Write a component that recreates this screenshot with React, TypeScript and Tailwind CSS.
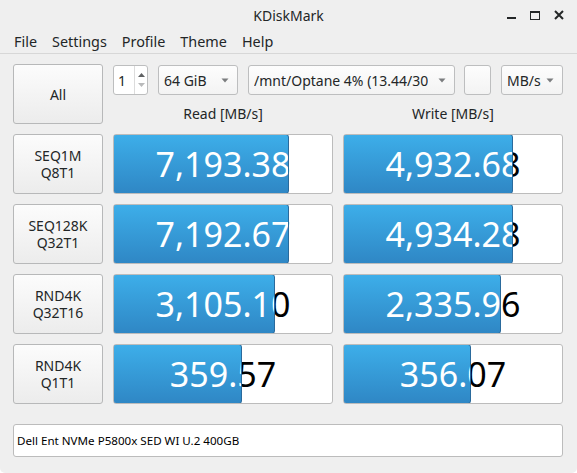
import React from "react";

const rows = [
  { l1: "SEQ1M", l2: "Q8T1", read: "7,193.38", rw: 176, write: "4,932.68", ww: 170 },
  { l1: "SEQ128K", l2: "Q32T1", read: "7,192.67", rw: 176, write: "4,934.28", ww: 170 },
  { l1: "RND4K", l2: "Q32T16", read: "3,105.10", rw: 162, write: "2,335.96", ww: 158 },
  { l1: "RND4K", l2: "Q1T1", read: "359.57", rw: 129, write: "356.07", ww: 128 },
];

function Arrow() {
  return (
    <svg width="8" height="5" viewBox="0 0 8 5" className="shrink-0">
      <path d="M0.5 0.5 L7.5 0.5 L4 4.5 Z" fill="#7b7d7f" />
    </svg>
  );
}

function Combo({ w, text }: { w: string; text: string }) {
  return (
    <div
      className={`${w} h-[30px] shrink-0 flex items-center justify-between pl-[5px] pr-[8px] rounded-[3px] border border-[#bdbebf] bg-gradient-to-b from-[#fdfdfd] to-[#f3f3f3] overflow-hidden`}
    >
      <span className="whitespace-nowrap overflow-hidden">{text}</span>
      <Arrow />
    </div>
  );
}

function Bar({ value, fill }: { value: string; fill: number }) {
  return (
    <div className="relative h-[60px] rounded-[3px] border border-[#bcbcbc] bg-white overflow-hidden">
      <div className="absolute inset-0 flex items-center justify-center text-[34px] text-black leading-none">
        {value}
      </div>
      <div
        className="absolute left-[-1px] top-[-1px] bottom-[-1px] overflow-hidden rounded-[3px] border border-[#2a6a9c] bg-gradient-to-b from-[#3daee9] to-[#2f87c5]"
        style={{ width: fill }}
      >
        <div className="absolute left-[-1px] top-0 bottom-0 w-[220px] flex items-center justify-center text-[34px] text-white leading-none">
          {value}
        </div>
      </div>
    </div>
  );
}

function LabelBtn({ children }: { children: React.ReactNode }) {
  return (
    <div className="h-[60px] rounded-[3px] border border-[#b7b8b9] bg-gradient-to-b from-[#fcfcfc] to-[#ececec] flex flex-col items-center justify-center text-[14px] leading-[17px] text-[#232627]">
      {children}
    </div>
  );
}

export default function App() {
  return (
    <div className="w-[577px] h-[473px] bg-white font-['Noto_Sans',sans-serif] text-[#232627]">
      <div className="w-[577px] h-[473px] bg-[#efefef] rounded-b-[5px] flex flex-col">
        {/* title bar */}
        <div className="h-[30px] grid grid-cols-[1fr_auto_1fr] items-center">
          <div />
          <div className="text-[14px] pt-[1px]">KDiskMark</div>
          <div className="flex items-center justify-end gap-[14px] pr-[13px]">
            <div className="w-[9px] h-[2px] bg-[#232627] mt-[6px]" />
            <div className="w-[10px] h-[9px] border border-[#232627] border-t-2" />
            <svg width="10" height="10" viewBox="0 0 10 10">
              <path d="M1 1 L9 9 M9 1 L1 9" stroke="#232627" strokeWidth="2" />
            </svg>
          </div>
        </div>
        {/* menu bar */}
        <div className="h-[24px] flex items-center pl-[14px] gap-[15px] text-[14.4px] border-b border-[#d7d7d7]">
          <span>File</span>
          <span>Settings</span>
          <span>Profile</span>
          <span>Theme</span>
          <span>Help</span>
        </div>
        {/* content */}
        <div className="px-[13px] pt-[10px]">
          <div className="grid grid-cols-[90px_220px_220px] gap-x-[10px] gap-y-[10px]">
            <div className="h-[60px] rounded-[3px] border border-[#b7b8b9] bg-gradient-to-b from-[#fcfcfc] to-[#ececec] flex items-center justify-center text-[14px]">
              All
            </div>
            <div className="col-span-2 flex flex-col">
              <div className="flex items-center mt-[1px] text-[14px]">
                <div className="w-[35px] h-[30px] shrink-0 flex rounded-[3px] border border-[#bdbebf] bg-white">
                  <div className="flex-1 flex items-center pl-[4px]">1</div>
                  <div className="w-[13px] border-l border-[#dcdcdc] flex flex-col items-center justify-center gap-[6px]">
                    <svg width="7" height="4" viewBox="0 0 7 4">
                      <path d="M0 4 L7 4 L3.5 0 Z" fill="#5f6163" />
                    </svg>
                    <svg width="7" height="4" viewBox="0 0 7 4">
                      <path d="M0 0 L7 0 L3.5 4 Z" fill="#b9babb" />
                    </svg>
                  </div>
                </div>
                <div className="w-[10px] shrink-0" />
                <Combo w="w-[80px]" text="64 GiB" />
                <div className="w-[10px] shrink-0" />
                <Combo w="w-[207px]" text="/mnt/Optane 4% (13.44/30" />
                <div className="w-[9px] shrink-0" />
                <div className="w-[27px] h-[30px] shrink-0 rounded-[3px] border border-[#bdbebf] bg-gradient-to-b from-[#fdfdfd] to-[#f3f3f3]" />
                <div className="w-[10px] shrink-0" />
                <Combo w="w-[62px]" text="MB/s" />
              </div>
              <div className="grid grid-cols-[220px_220px] gap-x-[10px] mt-[9px] text-[14px] leading-[19px]">
                <div className="text-center">Read [MB/s]</div>
                <div className="text-center">Write [MB/s]</div>
              </div>
            </div>
            {rows.map((r, i) => (
              <React.Fragment key={i}>
                <LabelBtn>
                  <span>{r.l1}</span>
                  <span>{r.l2}</span>
                </LabelBtn>
                <Bar value={r.read} fill={r.rw} />
                <Bar value={r.write} fill={r.ww} />
              </React.Fragment>
            ))}
          </div>
          <div className="mt-[20px] h-[33px] w-[550px] rounded-[3px] border border-[#bcbcbc] bg-white flex items-center pl-[3px] text-[11.6px] text-black">
            Dell Ent NVMe P5800x SED WI U.2 400GB
          </div>
        </div>
      </div>
    </div>
  );
}
